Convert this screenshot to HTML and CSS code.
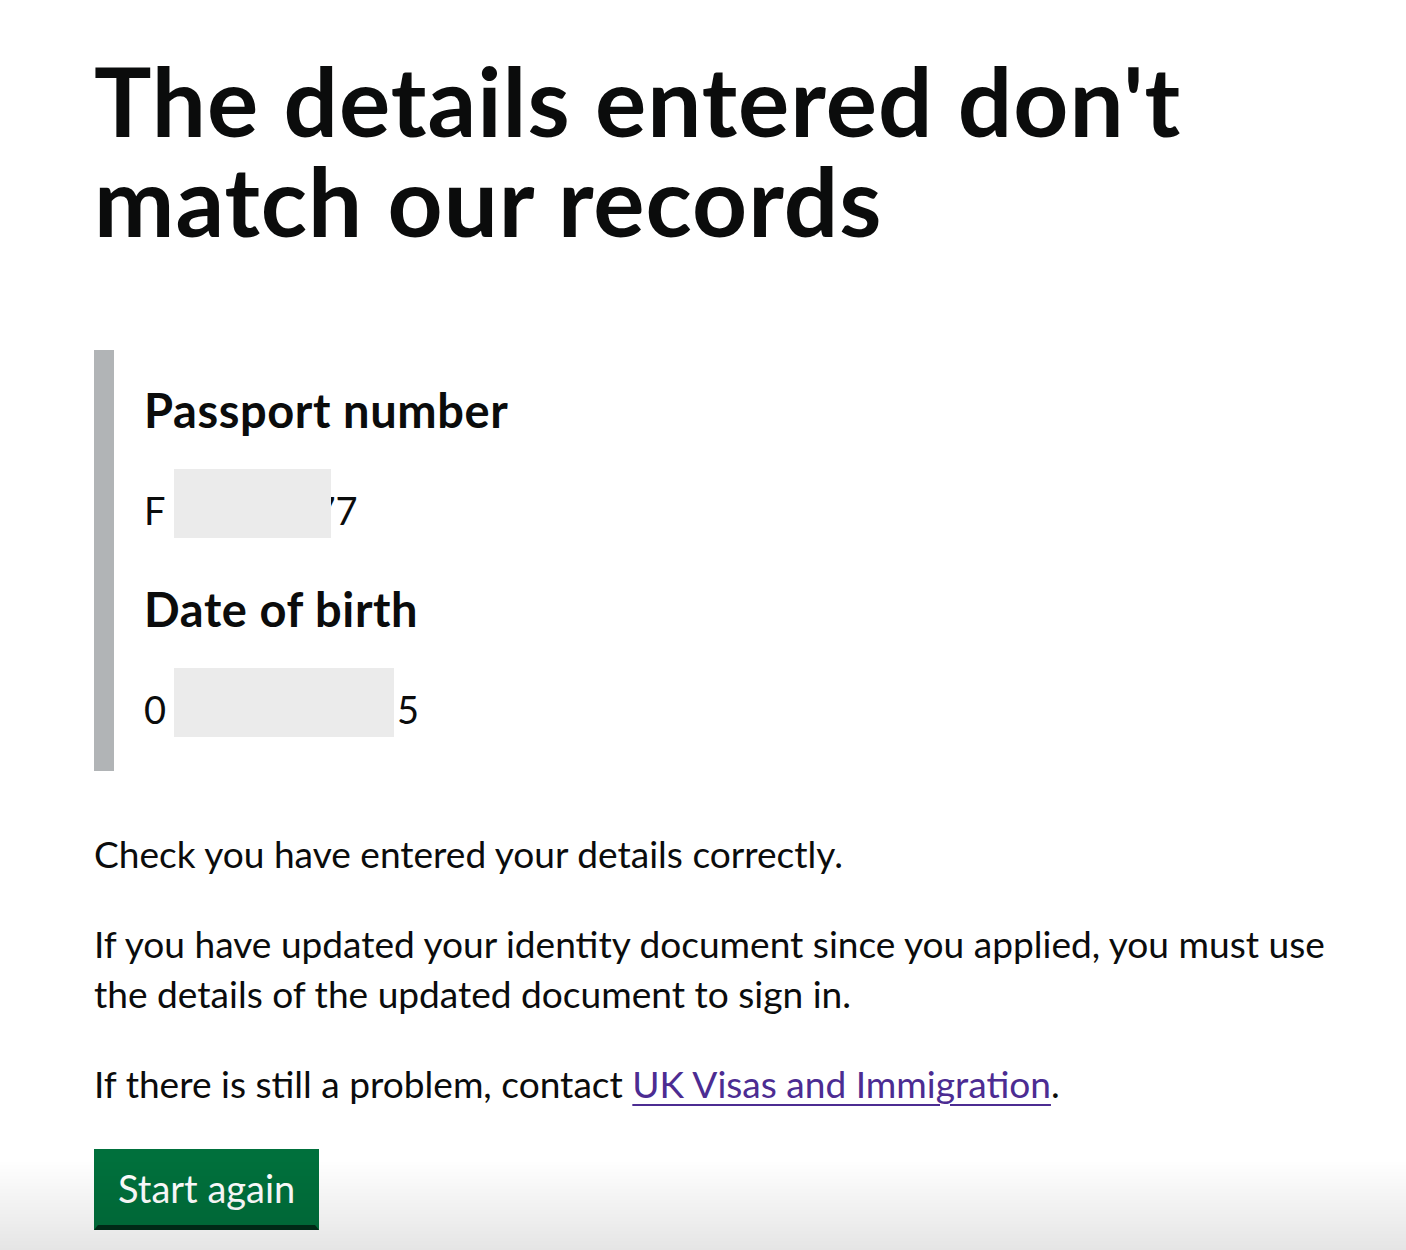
FILE: index.html
```html
<!DOCTYPE html>
<html lang="en">
<head>
<meta charset="utf-8">
<title>The details entered don't match our records</title>
<link rel="stylesheet" href="styles.css">
</head>
<body>
<main class="page">
  <h1 class="title">The details entered don't match our records</h1>
  <div class="inset">
    <h2 class="label">Passport number</h2>
    <p class="value">F<span class="mask mask-passport"></span>77</p>
    <h2 class="label">Date of birth</h2>
    <p class="value">0<span class="mask mask-dob"></span>5</p>
  </div>
  <p class="body">Check you have entered your details correctly.</p>
  <p class="body">If you have updated your identity document since you applied, you must use the details of the updated document to sign in.</p>
  <p class="body">If there is still a problem, contact <a class="link" href="#">UK Visas and Immigration</a>.</p>
  <button class="button" type="button">Start again</button>
</main>
<div class="fade"></div>
</body>
</html>
```
FILE: styles.css
```css
html, body {
  margin: 0;
  padding: 0;
  background: #ffffff;
}
body {
  font-family: Lato, "Liberation Sans", sans-serif;
  color: #0b0c0c;
}
.page {
  padding: 50px 40px 0 94px;
  max-width: 1260px;
}
.title {
  font-size: 96px;
  line-height: 100px;
  font-weight: 700;
  letter-spacing: 1px;
  margin: 0 0 100px;
  max-width: 1200px;
}
.inset {
  border-left: 20px solid #b1b4b6;
  padding: 30px 30px 34px 30px;
  margin: 0 0 58px;
}
.label {
  font-size: 47px;
  line-height: 60px;
  font-weight: 700;
  letter-spacing: 0.6px;
  margin: 0 0 29px;
}
.value {
  font-size: 38px;
  line-height: 50px;
  margin: 0 0 41px;
}
.value:last-child {
  margin-bottom: 0;
}
.mask {
  display: inline-block;
  position: relative;
  z-index: 1;
  background: #ebebeb;
  height: 69px;
  vertical-align: -13px;
}
.mask-passport {
  width: 157px;
  margin-left: 8px;
  margin-right: -17px;
}
.mask-dob {
  width: 220px;
  margin-left: 8px;
  margin-right: 3px;
}
.body {
  font-size: 37.1px;
  line-height: 50px;
  margin: 0 0 40px;
}
.link {
  color: #4c2c92;
  text-decoration: underline;
  text-decoration-thickness: 2px;
  text-underline-offset: 6px;
}
.button {
  display: block;
  font-family: Lato, "Liberation Sans", sans-serif;
  font-size: 38px;
  line-height: 38px;
  color: #ffffff;
  background: #00703c;
  border: 4px solid #00703c;
  border-bottom: 5px solid #002d18;
  border-radius: 0;
  padding: 16px 20px 18px;
  margin: 0;
  cursor: pointer;
}
.fade {
  position: fixed;
  left: 0;
  right: 0;
  bottom: 0;
  height: 90px;
  background: linear-gradient(to bottom, rgba(0,0,0,0), rgba(0,0,0,0.1));
  pointer-events: none;
}
```
